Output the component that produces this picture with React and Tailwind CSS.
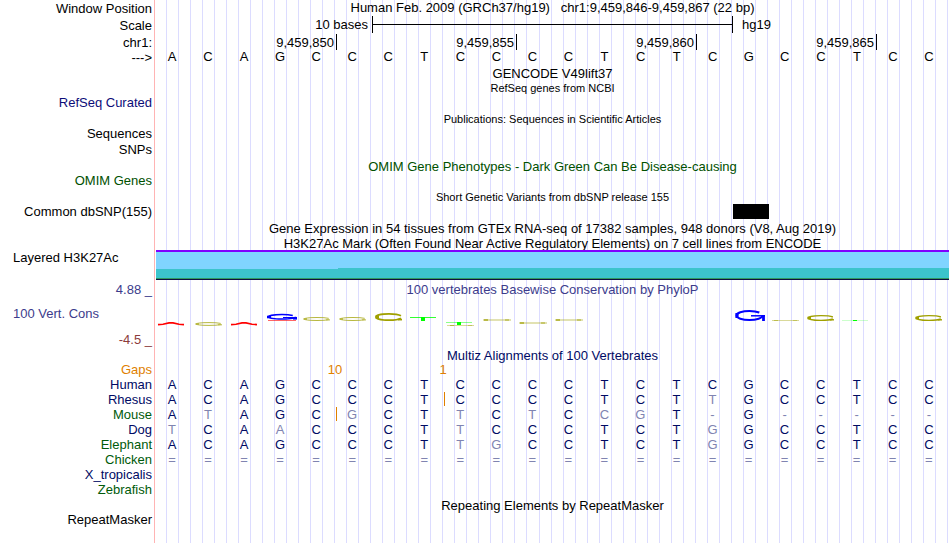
const BASES = "ACAGCCCTCCCCTCTCGCCTCC";

const TICKS = ["9,459,850", "9,459,855", "9,459,860", "9,459,865"];

// lower case marks a base that differs from the human one
const SPECIES = [
  { name: "Human", color: "text-[#000a64]", seq: "ACAGCCCTCCCCTCTCGCCTCC" },
  { name: "Rhesus", color: "text-[#000a64]", seq: "ACAGCCCTCCCCTCTtGCCTCC", insertAt: 8 },
  { name: "Mouse", color: "text-[#005a0a]", seq: "AtAGCgCTtCtCcgT-G-----", insertAt: 5 },
  { name: "Dog", color: "text-[#000a64]", seq: "tCAaCCCTtCCCTCTgGCCTCC" },
  { name: "Elephant", color: "text-[#005a0a]", seq: "ACAGCCCTtgCCTCTgGCCTCC" },
  { name: "Chicken", color: "text-[#005a0a]", seq: "======================" },
  { name: "X_tropicalis", color: "text-[#000a64]", seq: "" },
  { name: "Zebrafish", color: "text-[#005a0a]", seq: "" },
];

function GridLines() {
  return (
    <div className="absolute inset-0 flex" aria-hidden="true">
      <div className="w-[155px] shrink-0 border-r border-[#ffb4b4]" />
      {Array.from({ length: 66 }, (_, i) => (
        <div key={i} className="flex-1 border-l border-[#dcdcff] nth-2:border-l-0" />
      ))}
      <div className="w-[3px] shrink-0 border-l border-[#dcdcff]" />
    </div>
  );
}

function Track({ label, height, labelClass = "text-right", children }) {
  return (
    <div className={`flex ${height}`}>
      <div className={`w-[155px] shrink-0 pr-[3px] ${labelClass}`}>{label}</div>
      <div className="min-w-0 flex-1">{children}</div>
    </div>
  );
}

function Title({ children, className = "" }) {
  return <div className={`whitespace-pre text-center ${className}`}>{children}</div>;
}

function RingMark({ x, y, ry, width = 1, opacity = 1 }) {
  return (
    <g stroke="#a0a000" fill="none" opacity={opacity}>
      <ellipse
        cx={x}
        cy={y}
        rx="13"
        ry={ry}
        strokeWidth={width}
        pathLength="100"
        strokeDasharray="94 6"
        strokeDashoffset="-3"
      />
      <line x1={x - 13.5} x2={x - 10} y1={y} y2={y} strokeWidth={width + ry / 2} />
      <line x1={x + 9} x2={x + 13} y1={y + ry - 0.6} y2={y + ry - 0.6} strokeWidth={width} />
    </g>
  );
}

function ConservationPlot() {
  return (
    <svg
      className="block h-[51px] w-full"
      viewBox="155 297 795 51"
      preserveAspectRatio="none"
      role="img"
      aria-label="PhyloP score per base"
    >
      <g stroke="#ff0000" fill="none" strokeWidth="1.6">
        <polyline points="158,324.6 163,324.2 169,322.9 173,322.9 179,324.2 184,324.6" />
        <polyline points="231,324.6 236,324.2 242,322.9 246,322.9 252,324.2 257,324.6" />
        <line x1="268" x2="296" y1="320.5" y2="320.5" strokeWidth="1" opacity="0.6" />
      </g>

      <RingMark x={209} y={324} ry={1.4} opacity={0.75} />
      <RingMark x={317} y={319} ry={1.5} opacity={0.75} />
      <RingMark x={353} y={319} ry={1.5} opacity={0.75} />
      <RingMark x={389} y={317} ry={3.2} width={1.7} />
      <RingMark x={821} y={318} ry={2.4} width={1.4} />
      <RingMark x={929} y={318} ry={2.4} width={1.4} />

      <g stroke="#0000ff" fill="none">
        <ellipse cx="282" cy="316.8" rx="13.5" ry="2.3" strokeWidth="1.5" pathLength="100" strokeDasharray="94 6" />
        <line x1="283" x2="297" y1="317.5" y2="317.5" strokeWidth="1" />
        <line x1="293" x2="297" y1="318.3" y2="318.3" strokeWidth="2.6" />
        <line x1="267" x2="271" y1="317" y2="317" strokeWidth="2.6" />
        <ellipse cx="749.5" cy="315.5" rx="13" ry="4.6" strokeWidth="2" pathLength="100" strokeDasharray="92 8" />
        <line x1="751" x2="765" y1="315.8" y2="315.8" strokeWidth="1.5" />
        <line x1="763.5" x2="763.5" y1="315" y2="321" strokeWidth="2.8" />
        <line x1="737" x2="737" y1="313" y2="318" strokeWidth="3.2" />
      </g>

      <g fill="#00ff00">
        <rect x="410" y="317" width="26" height="1" opacity="0.8" />
        <rect x="421" y="317" width="4" height="4" />
        <rect x="446" y="322" width="26" height="1" opacity="0.45" />
        <rect x="457" y="322" width="4" height="3" />
        <rect x="842" y="320" width="26" height="1" opacity="0.2" />
        <rect x="853" y="320" width="4" height="1" />
      </g>

      <g fill="#a0a000">
        <rect x="447" y="325" width="27" height="1" opacity="0.4" />
        <rect x="450" y="325" width="4" height="1" opacity="0.6" />
        <rect x="468" y="325" width="4" height="1" opacity="0.4" />
        {[[483, 319], [519, 322], [555, 319]].map(([x, y]) => (
          <g key={x}>
            <rect x={x} y={y} width="28" height="2" opacity="0.3" />
            <rect x={x + 1} y={y} width="4" height="2" opacity="0.6" />
            <rect x={x + 22} y={y} width="4" height="2" opacity="0.4" />
          </g>
        ))}
        <rect x="772" y="320" width="27" height="1" opacity="0.4" />
        <rect x="774" y="320" width="4" height="1" opacity="0.5" />
        <rect x="793" y="320" width="4" height="1" opacity="0.4" />
      </g>
    </svg>
  );
}

function Alignment() {
  return (
    <div className="pr-[3px]">
      <table className="w-full table-fixed border-collapse">
        <tbody>
          {SPECIES.map((s) => (
            <tr key={s.name} className="h-[15px]">
              <th scope="row" className={`w-[154px] p-0 pr-[2px] text-right font-normal ${s.color}`}>
                {s.name}
              </th>
              {BASES.split("").map((_, i) => {
                const c = s.seq[i] || "";
                const same = c >= "A" && c <= "Z";
                return (
                  <td
                    key={i}
                    className={`relative p-0 text-center ${same ? "text-[#000a64]" : "text-[#8084b1]"}`}
                  >
                    {s.insertAt === i && (
                      <span className="absolute left-[2px] top-0 h-[14px] w-px bg-[#e08000]" />
                    )}
                    {c.toUpperCase()}
                  </td>
                );
              })}
            </tr>
          ))}
        </tbody>
      </table>
    </div>
  );
}

export default function App() {
  return (
    <main className="relative min-h-screen overflow-hidden bg-white font-['Liberation_Sans',Arial,sans-serif] text-[13px] leading-[15px] text-black">
      <GridLines />
      <div className="relative">
        <Track label="Window Position" height="h-4" labelClass="text-right pt-px">
          <Title>{"Human Feb. 2009 (GRCh37/hg19)   chr1:9,459,846-9,459,867 (22 bp)"}</Title>
        </Track>

        <Track label="Scale" height="h-[18px]" labelClass="text-right pt-[2px]">
          <div className="grid h-[17px] grid-cols-22 pl-px pr-[2px]">
            <div className="col-span-6 pr-1 pt-px text-right">10 bases</div>
            <div className="col-span-10 flex items-center border-l border-black">
              <div className="h-px w-full bg-black" />
            </div>
            <div className="col-span-6 border-l border-black pl-[9px] pt-px">hg19</div>
          </div>
        </Track>

        <Track label="chr1:" height="h-[15px]" labelClass="text-right pt-px">
          <div className="grid h-[14px] grid-cols-22 pl-px pr-[2px]">
            {TICKS.map((t) => (
              <div key={t} className="col-span-5 border-black pr-[2px] pt-px text-right not-first:border-l">
                {t}
              </div>
            ))}
            <div className="col-span-2 border-l border-black" />
          </div>
        </Track>

        <Track label="--->" height="h-[17px]" labelClass="text-right pt-px">
          <div className="-ml-px grid grid-cols-22 pr-[3px] text-center">
            {BASES.split("").map((b, i) => (
              <span key={i}>{b}</span>
            ))}
          </div>
        </Track>

        <Track height="h-[15px]">
          <Title>GENCODE V49lift37</Title>
        </Track>
        <Track height="h-[14px]">
          <Title className="text-[11px]">RefSeq genes from NCBI</Title>
        </Track>
        <Track label="RefSeq Curated" height="h-[17px]" labelClass="text-right text-[#0c0c78]" />
        <Track height="h-[14px]">
          <Title className="text-[11px]">Publications: Sequences in Scientific Articles</Title>
        </Track>
        <Track label="Sequences" height="h-4" />
        <Track label="SNPs" height="h-[17px]" />
        <Track height="h-[14px]">
          <Title className="text-[#005000]">OMIM Gene Phenotypes - Dark Green Can Be Disease-causing</Title>
        </Track>
        <Track label="OMIM Genes" height="h-[17px]" labelClass="text-right text-[#005000]" />
        <Track height="h-[14px]">
          <Title className="text-[11px]">Short Genetic Variants from dbSNP release 155</Title>
        </Track>

        <Track label="Common dbSNP(155)" height="h-[17px]">
          <div className="grid grid-cols-22 pl-[2px] pr-px">
            <div className="col-start-17 h-[15px] bg-black" />
          </div>
        </Track>

        <Track height="h-[15px]">
          <Title>Gene Expression in 54 tissues from GTEx RNA-seq of 17382 samples, 948 donors (V8, Aug 2019)</Title>
        </Track>
        <Track height="h-[14px]">
          <Title>H3K27Ac Mark (Often Found Near Active Regulatory Elements) on 7 cell lines from ENCODE</Title>
        </Track>

        <Track label="Layered H3K27Ac" height="h-8" labelClass="pl-[13px]">
          <div className="mx-px">
            <div className="h-[2px] bg-[#8000ff]" />
            <div className="h-4 bg-[#80d4ff]" />
            <div className="flex h-px bg-[#3cc4cc]">
              <div className="w-[23%] bg-[#80d4ff]" />
            </div>
            <div className="h-[9px] bg-[#3cc4cc]" />
            <div className="h-px bg-[#309860]" />
            <div className="h-px bg-[#101040]" />
          </div>
        </Track>

        <Track label="4.88 _" height="h-[15px]" labelClass="text-right text-[#3c3c8c]">
          <Title className="text-[#3c3c8c]">100 vertebrates Basewise Conservation by PhyloP</Title>
        </Track>

        <Track
          height="h-[51px]"
          labelClass="flex flex-col justify-between pt-[9px] pb-px"
          label={
            <>
              <span className="pl-[13px] text-[#3c3c8c]">100 Vert. Cons</span>
              <span className="text-right text-[#8c3c3c]">-4.5 _</span>
            </>
          }
        >
          <ConservationPlot />
        </Track>

        <Track height="h-[14px]">
          <Title className="text-[#000a64]">Multiz Alignments of 100 Vertebrates</Title>
        </Track>
        <Track label="Gaps" height="h-[15px]" labelClass="text-right text-[#e08000]">
          <div className="grid grid-cols-22 pr-[3px] text-center text-[#e08000]">
            <span className="col-span-2 col-start-5">10</span>
            <span className="col-span-2 col-start-8">1</span>
          </div>
        </Track>

        <Alignment />

        <Track height="h-[15px]">
          <Title className="pt-px">Repeating Elements by RepeatMasker</Title>
        </Track>
        <Track label="RepeatMasker" height="h-[31px]" />
      </div>
    </main>
  );
}
